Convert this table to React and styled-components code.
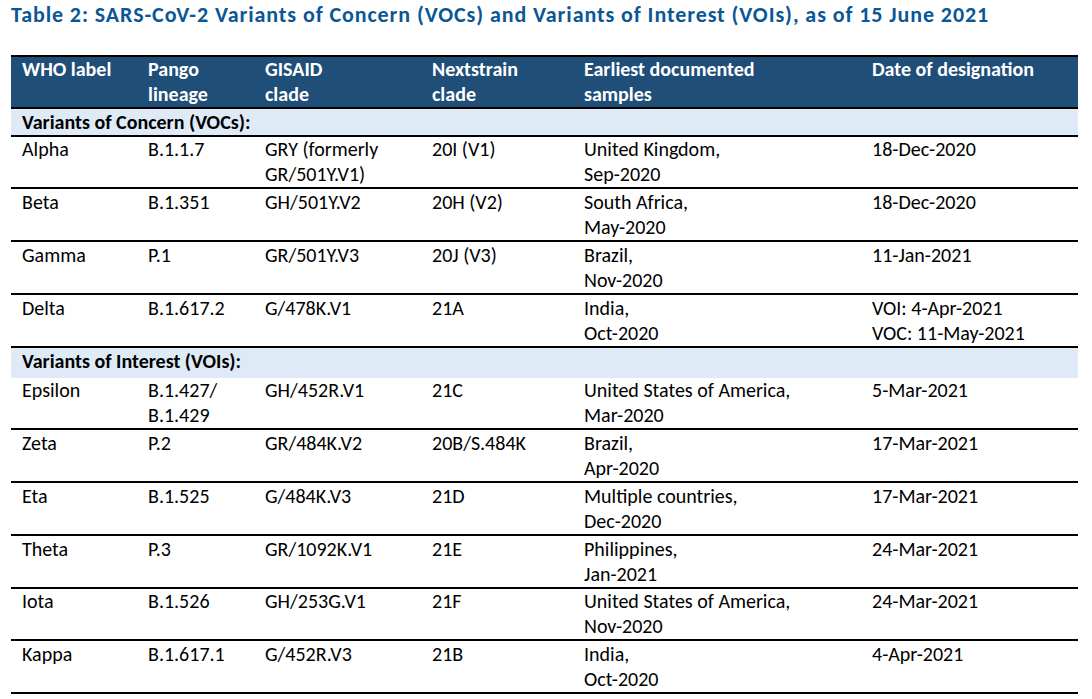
import React from "react";
import styled, { createGlobalStyle } from "styled-components";

const GlobalStyle = createGlobalStyle`
  html, body {
    margin: 0;
    padding: 0;
    background: #ffffff;
  }
  body {
    font-family: "Carlito", "Lato", "Liberation Sans", sans-serif;
  }
`;

const columns = [126, 117, 167, 152, 288, 217];

const headers = [
  ["WHO label"],
  ["Pango", "lineage"],
  ["GISAID", "clade"],
  ["Nextstrain", "clade"],
  ["Earliest documented", "samples"],
  ["Date of designation"],
];

const groups = [
  {
    title: "Variants of Concern (VOCs):",
    closed: true,
    rows: [
      ["Alpha", "B.1.1.7", "GRY (formerly|GR/501Y.V1)", "20I (V1)", "United Kingdom,|Sep-2020", "18-Dec-2020"],
      ["Beta", "B.1.351", "GH/501Y.V2", "20H (V2)", "South Africa,|May-2020", "18-Dec-2020"],
      ["Gamma", "P.1", "GR/501Y.V3", "20J (V3)", "Brazil,|Nov-2020", "11-Jan-2021"],
      ["Delta", "B.1.617.2", "G/478K.V1", "21A", "India,|Oct-2020", "VOI: 4-Apr-2021|VOC: 11-May-2021"],
    ],
  },
  {
    title: "Variants of Interest (VOIs):",
    closed: false,
    rows: [
      ["Epsilon", "B.1.427/|B.1.429", "GH/452R.V1", "21C", "United States of America,|Mar-2020", "5-Mar-2021"],
      ["Zeta", "P.2", "GR/484K.V2", "20B/S.484K", "Brazil,|Apr-2020", "17-Mar-2021"],
      ["Eta", "B.1.525", "G/484K.V3", "21D", "Multiple countries,|Dec-2020", "17-Mar-2021"],
      ["Theta", "P.3", "GR/1092K.V1", "21E", "Philippines,|Jan-2021", "24-Mar-2021"],
      ["Iota", "B.1.526", "GH/253G.V1", "21F", "United States of America,|Nov-2020", "24-Mar-2021"],
      ["Kappa", "B.1.617.1", "G/452R.V3", "21B", "India,|Oct-2020", "4-Apr-2021"],
    ],
  },
];

const Lines = ({ text }) =>
  text.split("|").map((line, i) => (
    <React.Fragment key={i}>
      {i > 0 && <br />}
      {line}
    </React.Fragment>
  ));

const App = () => {
  return (
    <>
      <GlobalStyle />
      <Page>
        <Title>
          Table 2: SARS-CoV-2 Variants of Concern (VOCs) and Variants of
          Interest (VOIs), as of 15 June 2021
        </Title>

        <Table>
          <colgroup>
            {columns.map((w, i) => (
              <col key={i} style={{ width: w }} />
            ))}
          </colgroup>
          <thead>
            <tr>
              {headers.map((h, i) => (
                <HeadCell key={i}>
                  <Lines text={h.join("|")} />
                </HeadCell>
              ))}
            </tr>
          </thead>
          {groups.map((g) => (
            <tbody key={g.title}>
              <tr>
                <GroupCell colSpan={6} $closed={g.closed}>
                  {g.title}
                </GroupCell>
              </tr>
              {g.rows.map((r) => (
                <tr key={r[0]}>
                  {r.map((c, i) => (
                    <Cell key={i}>
                      <Lines text={c} />
                    </Cell>
                  ))}
                </tr>
              ))}
            </tbody>
          ))}
        </Table>
      </Page>
    </>
  );
};

const Page = styled.div`
  width: 1092px;
  height: 699px;
  overflow: hidden;
  padding: 0 14px 0 11px;
  box-sizing: border-box;
`;

const Title = styled.h2`
  margin: 0;
  padding-top: 2px;
  font-size: 22px;
  line-height: 26px;
  letter-spacing: 0.92px;
  font-weight: 700;
  color: #0b5796;
  white-space: nowrap;
`;

const Table = styled.table`
  margin-top: 27px;
  width: 1067px;
  border-collapse: collapse;
  table-layout: fixed;
  border-top: 2px solid #000;
  font-size: 20px;
  line-height: 25px;
  color: #000;
`;

const HeadCell = styled.th`
  background: #1f4e79;
  color: #ffffff;
  font-weight: 700;
  text-align: left;
  vertical-align: top;
  padding: 0 11px;
  height: 50px;
  white-space: nowrap;
  border-bottom: 2px solid #000;
`;

const GroupCell = styled.td`
  background: #deeaf6;
  font-weight: 700;
  padding: ${({ $closed }) => ($closed ? "0.5px 11px 0" : "1.5px 11px 1.5px")};
  white-space: nowrap;
  border-bottom: 2px solid ${({ $closed }) => ($closed ? "#000" : "#deeaf6")};
`;

const Cell = styled.td`
  vertical-align: top;
  padding: 0.75px 11px 0;
  line-height: 25px;
  white-space: nowrap;
  border-bottom: 2px solid #000;
`;

export default App;
